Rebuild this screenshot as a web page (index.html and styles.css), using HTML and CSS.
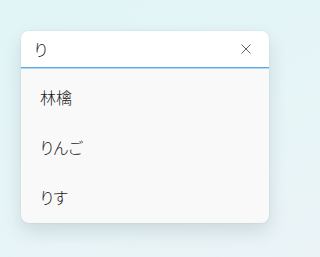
FILE: index.html
```html
<!DOCTYPE html>
<html lang="ja">
<head>
<meta charset="utf-8">
<link rel="stylesheet" href="styles.css">
</head>
<body>
<div class="stage">
  <div class="combo">
    <div class="field">
      <span class="value">り</span>
      <svg class="clear" width="10" height="10" viewBox="0 0 10 10" aria-hidden="true">
        <path d="M0.5 0.5 L9.5 9.5 M9.5 0.5 L0.5 9.5" stroke="#5f5f5f" stroke-width="1" fill="none"/>
      </svg>
    </div>
    <ul class="list">
      <li class="item">林檎</li>
      <li class="item">りんご</li>
      <li class="item">りす</li>
    </ul>
  </div>
</div>
</body>
</html>
```

FILE: styles.css
```css
html, body {
  margin: 0;
  padding: 0;
  height: 100%;
}
body {
  background: linear-gradient(160deg, #e1f5f6 0%, #e6f5f7 50%, #ebf3f7 100%);
  font-family: "Noto Sans CJK JP", "Noto Sans", sans-serif;
  color: #1a1a1a;
}
.stage {
  padding: 31px 27px 0 21px;
}
.combo {
  width: 248px;
  border-radius: 8px;
  overflow: hidden;
  box-shadow: 0 8px 18px rgba(40, 70, 80, 0.15), 0 0 2px rgba(40, 70, 80, 0.12);
  background: #f9f9f9;
}
.field {
  height: 36px;
  background: #ffffff;
  border-bottom: 1px solid #5ea6de;
  box-shadow: 0 1px 0 #b4d6f0;
  position: relative;
  display: flex;
  align-items: center;
  justify-content: space-between;
  padding: 0 18px 0 13px;
}
.value {
  font-size: 16px;
  font-weight: 300;
  font-feature-settings: "palt";
  line-height: 1;
}
.clear {
  display: block;
  flex: none;
}
.list {
  list-style: none;
  margin: 0;
  padding: 4px 0 1px;
}
.item {
  height: 50px;
  display: flex;
  align-items: center;
  padding-left: 19px;
  font-size: 16px;
  font-weight: 300;
  font-feature-settings: "palt";
  line-height: 1;
}
```
